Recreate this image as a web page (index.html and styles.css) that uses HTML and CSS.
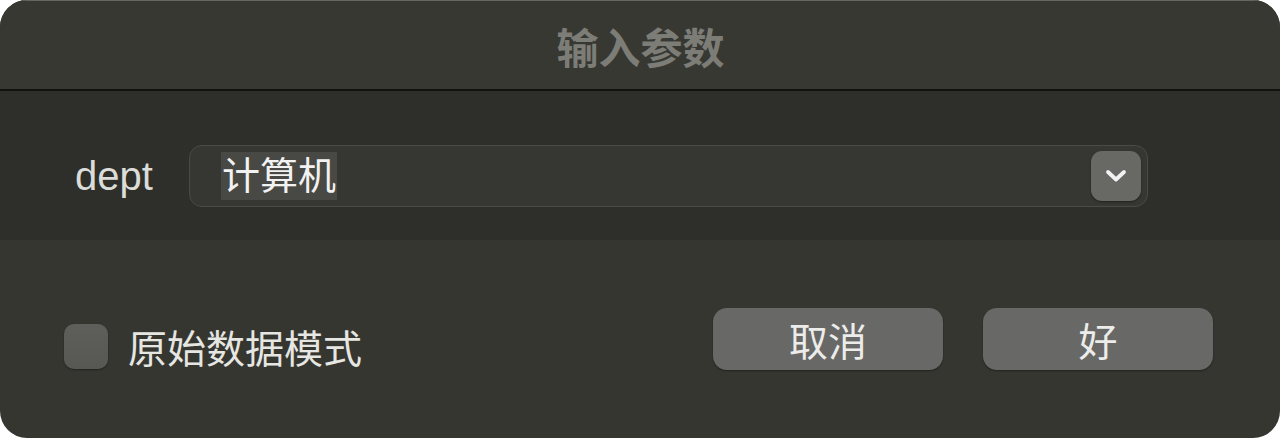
FILE: index.html
```html
<!DOCTYPE html>
<html lang="zh">
<head>
  <meta charset="UTF-8">
  <meta name="viewport" content="width=device-width, initial-scale=1.0">
  <title>输入参数</title>
  <link rel="stylesheet" href="styles.css">
</head>
<body>
<div class="window">
  <div class="titlebar">输入参数</div>
  <div class="params">
    <label class="param-label">dept</label>
    <div class="combo">
      <span class="combo-value">计算机</span>
      <span class="combo-btn">
        <svg width="22" height="14" viewBox="0 0 22 14"><path d="M3 3 L11 10.5 L19 3" fill="none" stroke="#f2f2f2" stroke-width="3.8" stroke-linecap="round" stroke-linejoin="round"/></svg>
      </span>
    </div>
  </div>
  <div class="footer">
    <label class="check"><span class="box"></span>原始数据模式</label>
    <div class="buttons">
      <button class="btn">取消</button>
      <button class="btn">好</button>
    </div>
  </div>
</div>
</body>
</html>
```

FILE: styles.css
```css
body {
  margin: 0;
  background: #fff;
  font-family: "Liberation Sans", "Noto Sans CJK SC", sans-serif;
}
.window {
  height: 438px;
  border-radius: 27px;
  overflow: hidden;
  background: #363631;
  display: flex;
  flex-direction: column;
}
.titlebar {
  height: 91px;
  box-sizing: border-box;
  border-top: 1px solid #66665f;
  border-bottom: 2px solid #121210;
  background: #383833;
  color: #7d7d78;
  font-size: 42px;
  font-weight: bold;
  display: flex;
  align-items: center;
  justify-content: center;
  padding-left: 1px;
}
.params {
  height: 149px;
  box-sizing: border-box;
  background: #2e2e2a;
  display: flex;
  align-items: center;
  padding: 20px 132px 0 75px;
}
.param-label {
  color: #dcdcd8;
  font-size: 40px;
  width: 114px;
  padding-top: 2px;
}
.combo {
  flex: 1;
  height: 60px;
  border: 1px solid #4b4b46;
  border-radius: 13px;
  background: #363632;
  display: flex;
  align-items: center;
  justify-content: space-between;
  padding: 0 6px 0 31px;
}
.combo-value {
  background: #484844;
  color: #f2f2f2;
  font-size: 38px;
  line-height: 48px;
  padding: 0 1px;
}
.combo-btn {
  width: 50px;
  height: 50px;
  border-radius: 11px;
  background: #686865;
  box-shadow: 0 1px 2px rgba(0,0,0,0.4);
  display: flex;
  align-items: center;
  justify-content: center;
}
.footer {
  flex: 1;
  display: flex;
  align-items: center;
  justify-content: space-between;
  padding: 0 67px 0 64px;
}
.check {
  display: flex;
  align-items: center;
  color: #e6e6e2;
  font-size: 39px;
  margin-top: 14px;
}
.box {
  width: 44px;
  height: 45px;
  border-radius: 10px;
  background: linear-gradient(#5e5e5b, #575754);
  box-shadow: 0 1px 2px rgba(0,0,0,0.4);
  margin-right: 20px;
}
.buttons {
  display: flex;
  gap: 40px;
}
.btn {
  width: 230px;
  height: 62px;
  border: none;
  border-radius: 14px;
  background: #686866;
  color: #ececea;
  font-family: "Noto Sans CJK SC", sans-serif;
  font-size: 39px;
  line-height: 1;
  box-shadow: 0 1px 2px rgba(0,0,0,0.4);
  padding: 0;
}
```
